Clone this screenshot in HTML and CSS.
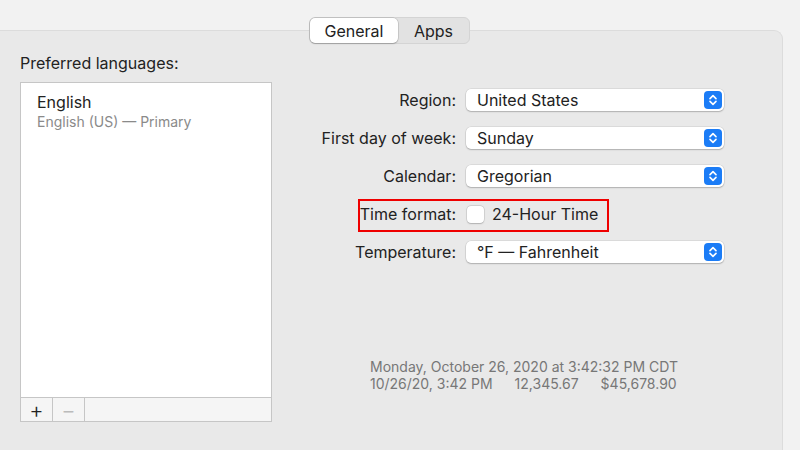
FILE: index.html
```html
<!DOCTYPE html>
<html>
    <head>
        <meta charset="utf-8">
        <title>Language &amp; Region</title>
        <meta name="viewport" content="width=device-width, initial-scale=1">
        <link rel="stylesheet" href="styles.css">
    </head>
    <body>
        <div class="window">
            <div class="tabs">
                <div class="segmented">
                    <button class="tab tab-active">General</button>
                    <button class="tab">Apps</button>
                </div>
            </div>

            <div class="panel">
                <div class="languages">
                    <div class="section-label">Preferred languages:</div>
                    <div class="lang-list">
                        <div class="lang-item">
                            <div class="lang-name">English</div>
                            <div class="lang-sub">English (US) &mdash; Primary</div>
                        </div>
                    </div>
                    <div class="list-footer">
                        <button class="list-btn">+</button>
                        <button class="list-btn list-btn-off">&minus;</button>
                        <div class="list-fill"></div>
                    </div>
                </div>

                <div class="settings">
                    <div class="form">
                        <span class="form-label">Region:</span>
                        <div class="popup"><span>United States</span><svg class="stepper" width="18" height="18" viewBox="0 0 18 18"><rect width="18" height="18" rx="4" fill="#1b7cf6"/><path d="M6 7.6 9 4.6 12 7.6M6 10.4 9 13.4 12 10.4" fill="none" stroke="#fff" stroke-width="1.6" stroke-linecap="round" stroke-linejoin="round"/></svg></div>

                        <span class="form-label">First day of week:</span>
                        <div class="popup"><span>Sunday</span><svg class="stepper" width="18" height="18" viewBox="0 0 18 18"><rect width="18" height="18" rx="4" fill="#1b7cf6"/><path d="M6 7.6 9 4.6 12 7.6M6 10.4 9 13.4 12 10.4" fill="none" stroke="#fff" stroke-width="1.6" stroke-linecap="round" stroke-linejoin="round"/></svg></div>

                        <span class="form-label">Calendar:</span>
                        <div class="popup"><span>Gregorian</span><svg class="stepper" width="18" height="18" viewBox="0 0 18 18"><rect width="18" height="18" rx="4" fill="#1b7cf6"/><path d="M6 7.6 9 4.6 12 7.6M6 10.4 9 13.4 12 10.4" fill="none" stroke="#fff" stroke-width="1.6" stroke-linecap="round" stroke-linejoin="round"/></svg></div>

                        <span class="form-label">Time format:</span>
                        <label class="check-row"><span class="checkbox"></span>24-Hour Time</label>

                        <span class="form-label">Temperature:</span>
                        <div class="popup"><span>&deg;F &mdash; Fahrenheit</span><svg class="stepper" width="18" height="18" viewBox="0 0 18 18"><rect width="18" height="18" rx="4" fill="#1b7cf6"/><path d="M6 7.6 9 4.6 12 7.6M6 10.4 9 13.4 12 10.4" fill="none" stroke="#fff" stroke-width="1.6" stroke-linecap="round" stroke-linejoin="round"/></svg></div>

                        <!-- annotation box round the time format row -->
                        <div class="highlight"></div>
                    </div>

                    <div class="sample">
                        <div>Monday, October 26, 2020 at 3:42:32 PM CDT</div>
                        <div><span>10/26/20, 3:42 PM</span><span class="gap">12,345.67</span><span class="gap">$45,678.90</span></div>
                    </div>
                </div>
            </div>
        </div>
    </body>
</html>
```

FILE: styles.css
```css
* {
    font-family: 'Inter', 'Roboto', sans-serif;
    box-sizing: border-box;
}
body {
    background-color: #f2f2f2;
    margin: 0px;
    padding: 0px;
    width: 800px;
    height: 450px;
    overflow: hidden;
    color: #222;
}

.window {
    padding-top: 17px;
}

.tabs {
    width: 779px;
    display: flex;
    justify-content: center;
    position: relative;
    z-index: 1;
}

.segmented {
    display: flex;
    background-color: #e2e2e2;
    border: 1px solid #d4d4d4;
    border-radius: 6px;
    padding: 0px;
}

.tab {
    height: 25px;
    width: 71px;
    border: none;
    background: none;
    font-size: 16px;
    color: #222;
    padding: 0px;
    border-radius: 5px;
}

.tab-active {
    width: 88px;
    background-color: white;
    box-shadow: 0 0 0 0.5px rgba(0, 0, 0, 0.18), 0 1px 1.5px rgba(0, 0, 0, 0.18);
}

.panel {
    margin-top: -14px;
    width: 783px;
    height: 420px;
    background-color: #e9e9e9;
    border-top: 1px solid #dcdcdc;
    border-right: 1px solid #dcdcdc;
    border-radius: 0 9px 0 0;
    display: flex;
    align-items: flex-start;
}

.languages {
    margin-left: 20px;
    padding-top: 23px;
    width: 252px;
}

.section-label {
    font-size: 16px;
    line-height: 19px;
    margin-bottom: 9px;
}

.lang-list {
    height: 315px;
    background-color: white;
    border: 1px solid #c6c6c6;
    border-bottom: none;
}

.lang-item {
    padding: 9px 0 0 16px;
}

.lang-name {
    font-size: 16px;
    line-height: 20px;
}

.lang-sub {
    font-size: 14px;
    line-height: 20px;
    color: #8a8a8a;
}

.list-footer {
    display: flex;
    height: 25px;
    border: 1px solid #c6c6c6;
    background-color: #f5f5f5;
}

.list-btn {
    width: 32px;
    border: none;
    border-right: 1px solid #c6c6c6;
    background-color: #f5f5f5;
    font-size: 22px;
    line-height: 20px;
    padding: 0px;
    color: #222;
    font-weight: 300;
}

.list-btn-off {
    color: #bbb;
}

.list-fill {
    flex-grow: 1;
}

.settings {
    margin-left: 28px;
    padding-top: 50px;
}

.form {
    position: relative;
    display: grid;
    grid-template-columns: 156px 258px;
    grid-auto-rows: 38px;
    column-gap: 10px;
    align-items: center;
}

.form-label {
    font-size: 16px;
    text-align: right;
}

.popup {
    height: 22px;
    background-color: white;
    border-radius: 5px;
    box-shadow: 0 0 0 0.5px rgba(0, 0, 0, 0.12), 0 1px 1.5px rgba(0, 0, 0, 0.2);
    display: flex;
    align-items: center;
    justify-content: space-between;
    padding: 0 2px 0 11px;
    font-size: 16px;
}

.stepper {
    display: block;
}

.check-row {
    display: flex;
    align-items: center;
    gap: 8px;
    font-size: 16px;
}

.checkbox {
    width: 17px;
    height: 17px;
    margin-left: 1px;
    background-color: white;
    border-radius: 4px;
    box-shadow: 0 0 0 0.5px rgba(0, 0, 0, 0.15), 0 0.5px 1.5px rgba(0, 0, 0, 0.18);
}

.highlight {
    position: absolute;
    left: 58px;
    top: 118px;
    width: 251px;
    height: 33px;
    border: 2px solid #ef0000;
}

.sample {
    margin-top: 87px;
    margin-left: 70px;
    font-size: 14px;
    line-height: 17px;
    color: #777;
}

.gap {
    margin-left: 22px;
}
```
